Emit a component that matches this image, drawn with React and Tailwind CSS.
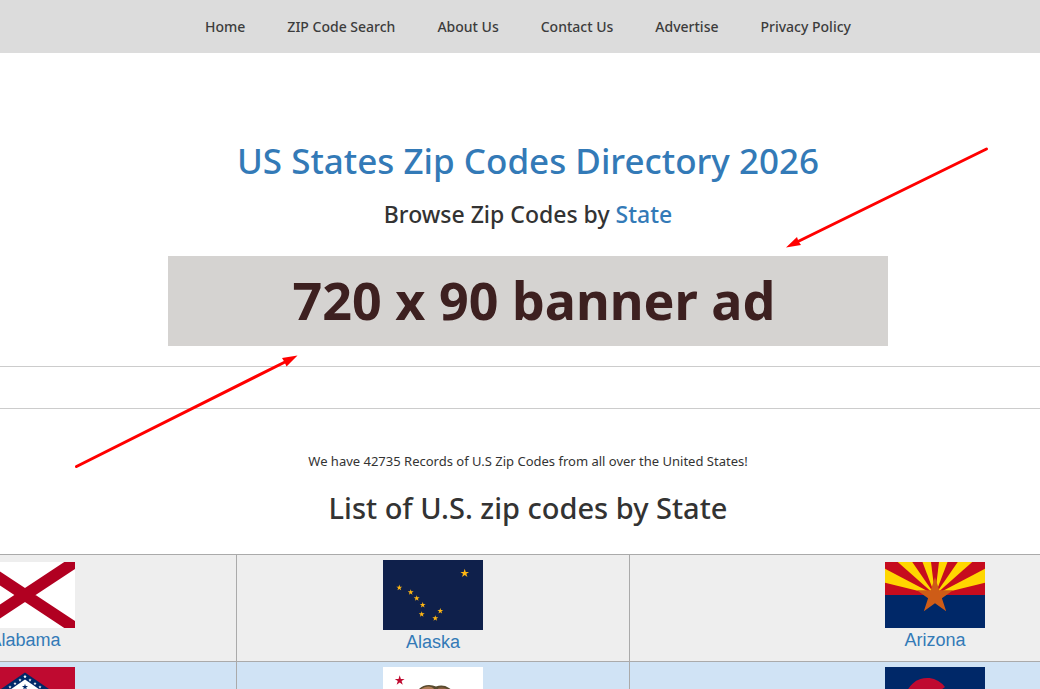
const navLinks = ["Home", "ZIP Code Search", "About Us", "Contact Us", "Advertise", "Privacy Policy"];

// points of a five pointed star around cx, cy
const starPoints = (cx, cy, r) =>
    Array.from({ length: 10 }, (_, i) => {
        const radius = i % 2 ? r * 0.382 : r;
        const angle = (Math.PI / 5) * i - Math.PI / 2;
        return `${(cx + radius * Math.cos(angle)).toFixed(2)},${(cy + radius * Math.sin(angle)).toFixed(2)}`;
    }).join(" ");

function Star({ x, y, r, fill }) {
    return <polygon points={starPoints(x, y, r)} fill={fill} />;
}

function Flag({ height = 66, children }) {
    return (
        <svg width="100" height={height} viewBox={`0 0 100 ${height}`} className="block mx-auto" aria-hidden="true">
            {children}
        </svg>
    );
}

function AlabamaFlag() {
    return (
        <Flag>
            <rect width="100" height="66" fill="#fff" />
            <path d="M-10 -6.6L110 72.6M110 -6.6L-10 72.6" stroke="#b10021" strokeWidth="11.8" />
        </Flag>
    );
}

function AlaskaFlag() {
    const dipper = [[16.3, 27.7], [27.7, 32.3], [33.7, 38.3], [39.7, 45], [38.7, 54.3], [57.3, 51], [52.3, 58.3]];
    return (
        <Flag height={70}>
            <rect width="100" height="70" fill="#0f204b" />
            <Star x={81.7} y={13.3} r={4.6} fill="#ffb612" />
            {dipper.map(([x, y]) => (
                <Star key={x} x={x} y={y} r={3.1} fill="#ffb612" />
            ))}
        </Flag>
    );
}

function ArizonaFlag() {
    const ray = (i) => {
        const a = (Math.PI / 13) * i;
        const b = (Math.PI / 13) * (i + 1);
        return `50,33 ${50 - 90 * Math.cos(a)},${33 - 90 * Math.sin(a)} ${50 - 90 * Math.cos(b)},${33 - 90 * Math.sin(b)}`;
    };
    return (
        <Flag>
            <rect width="100" height="66" fill="#c60c1e" />
            {[1, 3, 5, 7, 9, 11].map((i) => (
                <polygon key={i} points={ray(i)} fill="#ffd700" />
            ))}
            <rect y="33" width="100" height="33" fill="#002868" />
            <Star x={50} y={34} r={19} fill="#ce5c17" />
        </Flag>
    );
}

function ArkansasFlag() {
    const steps = [0, 1, 2, 3, 4, 5, 6];
    return (
        <Flag>
            <rect width="100" height="66" fill="#bf0a30" />
            <polygon points="50,5.5 90,33 50,60.5 10,33" fill="#002868" />
            <polygon points="50,12.5 79.8,33 50,53.5 20.2,33" fill="#fff" />
            {steps.map((i) => (
                <g key={i}>
                    <Star x={50 - i * 5} y={9.5 + i * 3.5} r={1.7} fill="#fff" />
                    <Star x={50 + i * 5} y={9.5 + i * 3.5} r={1.7} fill="#fff" />
                    <Star x={50 - i * 5} y={56.5 - i * 3.5} r={1.7} fill="#fff" />
                    <Star x={50 + i * 5} y={56.5 - i * 3.5} r={1.7} fill="#fff" />
                </g>
            ))}
            <Star x={50} y={20} r={3.2} fill="#002868" />
            <Star x={40} y={42} r={3.2} fill="#002868" />
            <Star x={60} y={42} r={3.2} fill="#002868" />
        </Flag>
    );
}

function CaliforniaFlag() {
    return (
        <Flag>
            <rect width="100" height="66" fill="#fff" />
            <Star x={16.7} y={13.5} r={5.2} fill="#bf0a30" />
            <path d="M24 28L36 22Q40 18 46 18Q50 18 53 19.5Q60 17 66 21Q74 26 74 34L78 48H70L64 38L56 40L54 48H46L44 38L34 40L30 48H24L28 36L22 32Z" fill="#584a2e" />
            <path d="M38 22Q42 19 46 19.5Q50 20 52 23L48 30H32Z" fill="#b07d55" />
            <path d="M55 21Q60 19 64 22L68 30H58Z" fill="#8a6040" />
            <rect y="58" width="100" height="8" fill="#bf0a30" />
        </Flag>
    );
}

function ColoradoFlag() {
    return (
        <Flag>
            <rect width="100" height="66" fill="#002868" />
            <rect y="22" width="100" height="22" fill="#fff" />
            <path d="M42 33L60 20A22 22 0 1 0 60 46Z" fill="#bf0a30" />
            <circle cx="42" cy="33" r="11" fill="#ffd700" />
        </Flag>
    );
}

const rows = [
    [
        { name: "Alabama", Image: AlabamaFlag },
        { name: "Alaska", Image: AlaskaFlag },
        { name: "Arizona", Image: ArizonaFlag },
    ],
    [
        { name: "Arkansas", Image: ArkansasFlag },
        { name: "California", Image: CaliforniaFlag },
        { name: "Colorado", Image: ColoradoFlag },
    ],
];

function Navbar() {
    return (
        <nav className="flex justify-center items-center h-[53px] bg-[#dcdcdc]">
            <ul className="flex gap-[42px] text-sm font-medium text-[#3c3c3c]">
                {navLinks.map((label) => (
                    <li key={label}>
                        <a href="#" className="hover:text-black">{label}</a>
                    </li>
                ))}
            </ul>
        </nav>
    );
}

function StatesTable() {
    return (
        <div className="flex justify-center pr-0.5">
            <table className="w-[1428px] shrink-0 table-fixed border-collapse text-center font-['Liberation_Sans',Arial,sans-serif] text-lg">
                <colgroup>
                    <col className="w-[423px]" />
                    <col className="w-[393px]" />
                    <col />
                </colgroup>
                <tbody>
                    {rows.map((row, i) => (
                        <tr key={i} className="bg-[#eee] even:bg-[#d0e3f5]">
                            {row.map(({ name, Image }) => (
                                <td key={name} className="border border-[#aaa] pt-[5px] pb-[7px] align-middle">
                                    <a href="#" className="block leading-6 text-[#337ab7] hover:underline">
                                        <Image />
                                        {name}
                                    </a>
                                </td>
                            ))}
                        </tr>
                    ))}
                </tbody>
            </table>
        </div>
    );
}

function Arrows() {
    return (
        <svg width="1056" height="500" viewBox="0 0 1056 500" className="absolute top-0 left-1/2 -translate-x-1/2 pointer-events-none" aria-hidden="true">
            <g stroke="#f00" strokeWidth="3" strokeLinecap="round">
                <path d="M986.5 149L798 241.5" />
                <path d="M76.5 466.5L285 362" />
            </g>
            <g fill="#f00">
                <polygon points="786,247.5 797,237 798.5,241.5 801,245" />
                <polygon points="297.5,355.5 282,358 284.5,362 286.5,366.5" />
            </g>
        </svg>
    );
}

export default function App() {
    return (
        <div className="h-screen overflow-hidden bg-white">
            <div className="relative w-[calc(100%+16px)] font-['Noto_Sans','Open_Sans',sans-serif] text-[#333]">
                <Navbar />
                <main>
                    <header className="pt-[88px] text-center">
                        <h1 className="text-[35px] leading-10 font-medium text-[#337ab7]">
                            US States Zip Codes Directory 2026
                        </h1>
                        <h3 className="mt-[19px] text-[23px] leading-7 font-medium">
                            Browse Zip Codes by <a href="#" className="text-[#337ab7]">State</a>
                        </h3>
                        <div className="mt-7 mx-auto flex items-center justify-center max-w-[720px] h-[90px] bg-[#d5d3d1] pl-3 pb-0.5">
                            <span className="text-[52px] leading-none font-bold text-[#3d2020]">720 x 90 banner ad</span>
                        </div>
                    </header>
                    <hr className="mt-5 border-[#ccc]" />
                    <hr className="mt-[41px] border-[#ccc]" />
                    <section className="pt-[42px]">
                        <p className="text-center text-[13px] leading-5">
                            We have 42735 Records of U.S Zip Codes from all over the United States!
                        </p>
                        <h2 className="mt-[19px] mb-7 text-center text-[29px] leading-9 font-medium">
                            List of U.S. zip codes by State
                        </h2>
                        <StatesTable />
                    </section>
                </main>
                <Arrows />
            </div>
        </div>
    );
}
